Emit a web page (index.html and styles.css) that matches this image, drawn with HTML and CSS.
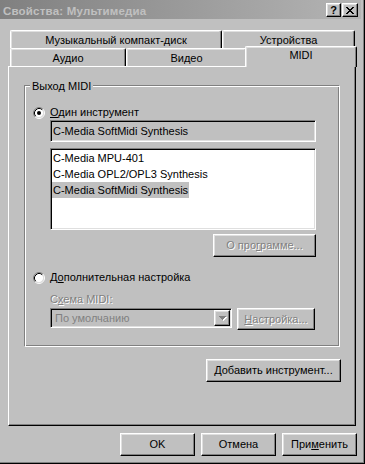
FILE: index.html
```html
<!DOCTYPE html>
<html lang="ru">
<head>
<meta charset="utf-8">
<title>Свойства: Мультимедиа</title>
<link rel="stylesheet" href="styles.css">
</head>
<body>
<div class="window">
  <div class="titlebar">
    <span class="title">Свойства: Мультимедиа</span>
    <div class="capbtns">
      <span class="capbtn help">?</span>
      <span class="capbtn close">
        <svg width="8" height="7" viewBox="0 0 8 7" shape-rendering="crispEdges"><path fill="#000" d="M0 0h2v1H0z M6 0h2v1H6z M1 1h2v1H1z M5 1h2v1H5z M2 2h4v1H2z M3 3h2v1H3z M2 4h4v1H2z M1 5h2v1H1z M5 5h2v1H5z M0 6h2v1H0z M6 6h2v1H6z"/></svg>
      </span>
    </div>
  </div>

  <div class="tabstrip">
    <div class="tabrow">
      <div class="tab tab-cd">Музыкальный компакт-диск</div>
      <div class="tab tab-dev">Устройства</div>
    </div>
    <div class="tabrow">
      <div class="tab tab-audio">Аудио</div>
      <div class="tab tab-video">Видео</div>
      <div class="tab tab-midi sel">MIDI</div>
    </div>
  </div>

  <div class="panel">
    <div class="group">
      <div class="legend">Выход MIDI</div>

      <div class="opt opt-first">
        <svg class="radio" width="12" height="12" viewBox="0 0 12 12">
          <circle cx="6" cy="6" r="4.5" fill="#fff"/>
          <path d="M2.11 9.89 A5.5 5.5 0 0 1 9.89 2.11" fill="none" stroke="#808080"/>
          <path d="M9.89 2.11 A5.5 5.5 0 0 1 2.11 9.89" fill="none" stroke="#fff"/>
          <path d="M2.82 9.18 A4.5 4.5 0 0 1 9.18 2.82" fill="none" stroke="#000"/>
          <path d="M9.18 2.82 A4.5 4.5 0 0 1 2.82 9.18" fill="none" stroke="#dfdfdf"/>
          <circle cx="6" cy="6" r="2" fill="#000"/>
        </svg>
        <span><u>О</u>дин инструмент</span>
      </div>

      <div class="field">C-Media SoftMidi Synthesis</div>

      <div class="list">
        <div class="item"><span>C-Media MPU-401</span></div>
        <div class="item"><span>C-Media OPL2/OPL3 Synthesis</span></div>
        <div class="item"><span class="selected">C-Media SoftMidi Synthesis</span></div>
      </div>

      <div class="btn disabled btn-about">О про<u>г</u>рамме...</div>

      <div class="opt opt-second">
        <svg class="radio" width="12" height="12" viewBox="0 0 12 12">
          <circle cx="6" cy="6" r="4.5" fill="#fff"/>
          <path d="M2.11 9.89 A5.5 5.5 0 0 1 9.89 2.11" fill="none" stroke="#808080"/>
          <path d="M9.89 2.11 A5.5 5.5 0 0 1 2.11 9.89" fill="none" stroke="#fff"/>
          <path d="M2.82 9.18 A4.5 4.5 0 0 1 9.18 2.82" fill="none" stroke="#000"/>
          <path d="M9.18 2.82 A4.5 4.5 0 0 1 2.82 9.18" fill="none" stroke="#dfdfdf"/>
        </svg>
        <span>Д<u>о</u>полнительная настройка</span>
      </div>

      <div class="scheme-label disabled-text">С<u>х</u>ема MIDI:</div>

      <div class="combo-row">
        <div class="combo">
          <span class="combo-text">По умолчанию</span>
          <span class="dropbtn">
            <svg width="9" height="6" viewBox="0 0 9 6" shape-rendering="crispEdges">
              <path fill="#fff" d="M2 2h7v1H2z M3 3h5v1H3z M4 4h3v1H4z M5 5h1v1H5z"/>
              <path fill="#808080" d="M1 1h7v1H1z M2 2h5v1H2z M3 3h3v1H3z M4 4h1v1H4z"/>
            </svg>
          </span>
        </div>
        <div class="btn disabled btn-setup"><u>Н</u>астройка...</div>
      </div>
    </div>

    <div class="btn btn-add"><u>Д</u>обавить инструмент...</div>
  </div>

  <div class="footer">
    <div class="btn btn-foot">OK</div>
    <div class="btn btn-foot">Отмена</div>
    <div class="btn btn-foot">При<u>м</u>енить</div>
  </div>
</div>
</body>
</html>
```

FILE: styles.css
```css
* {
  box-sizing: border-box;
}

html,
body {
  margin: 0;
  padding: 0;
}

body {
  width: 365px;
  height: 464px;
  overflow: hidden;
  background: #c0c0c0;
  color: #000;
  font-family: "Liberation Sans", Arial, sans-serif;
  font-size: 11px;
  line-height: 13px;
}

u {
  text-decoration: underline;
  text-underline-offset: 1px;
}

/* window frame (left/top cut off in the capture) */
.window {
  width: 365px;
  height: 464px;
  padding-right: 3px;
  border-right: 1px solid #000;
  border-bottom: 1px solid #000;
  box-shadow: inset -1px -1px #808080;
}

/* title bar */
.titlebar {
  height: 19px;
  display: flex;
  align-items: flex-start;
  padding: 0 3px 0 3px;
  background: linear-gradient(to right, #808080, #b4b4b4);
}

.title {
  flex: 1;
  padding-top: 5px;
  color: #c0c0c0;
  font-weight: bold;
  font-size: 11.5px;
  letter-spacing: 0.2px;
  white-space: nowrap;
}

.capbtns {
  display: flex;
  gap: 1px;
  margin-top: 3px;
}

.capbtn {
  width: 16px;
  height: 14px;
  display: flex;
  align-items: center;
  justify-content: center;
  background: #c0c0c0;
  border: 1px solid;
  border-color: #fff #000 #000 #fff;
  box-shadow: inset -1px -1px #808080, inset 1px 1px #dfdfdf;
}

.help {
  width: 15px;
  font-weight: bold;
  font-size: 11px;
  line-height: 11px;
}

/* tabs */
.tabstrip {
  width: 345px;
  margin: 11px 0 0 10px;
}

.tabrow {
  display: flex;
  height: 18px;
}

.tab {
  height: 18px;
  padding-top: 3px;
  text-align: center;
  white-space: nowrap;
  background: #c0c0c0;
  border-top: 1px solid #fff;
  border-left: 1px solid #fff;
  border-right: 1px solid #000;
  border-radius: 2px 2px 0 0;
  box-shadow: inset -1px 0 #808080, inset 1px 1px #dfdfdf;
}

.tab-cd {
  width: 212px;
}

.tab-dev {
  width: 133px;
}

.tab-audio {
  width: 116px;
}

.tab-video {
  width: 121px;
}

.tab-midi {
  width: 108px;
}

.tab.sel {
  position: relative;
  z-index: 1;
  width: 112px;
  height: 21px;
  margin: -2px -2px 0 -2px;
  padding-top: 2px;
  box-shadow: inset -1px 0 #808080, inset 1px 1px #dfdfdf;
}

/* tab page */
.panel {
  width: 348px;
  height: 360px;
  margin-left: 8px;
  display: flex;
  flex-direction: column;
  align-items: flex-start;
  border: 1px solid;
  border-color: #fff #000 #000 #fff;
  box-shadow: inset -1px -1px #808080;
}

.group {
  width: 316px;
  height: 262px;
  margin: 18px 0 0 15px;
  border: 1px solid;
  border-color: #808080 #fff #fff #808080;
  box-shadow: inset 1px 1px #fff, inset -1px -1px #808080;
  display: flex;
  flex-direction: column;
  align-items: flex-start;
}

.legend {
  width: max-content;
  margin: -6px 0 0 5px;
  padding: 0 2px;
  background: #c0c0c0;
}

.opt {
  display: flex;
  align-items: center;
  gap: 5px;
  height: 13px;
  margin-left: 8px;
  white-space: nowrap;
}

.radio {
  flex: none;
  display: block;
}

.opt-first {
  margin-top: 13px;
}

.opt-second {
  margin-top: 14px;
}

.sunken {
  border: 1px solid;
}

.field,
.list,
.combo {
  border: 1px solid;
  border-color: #808080 #fff #fff #808080;
  box-shadow: inset 1px 1px #000, inset -1px -1px #dfdfdf;
}

.field {
  width: 266px;
  height: 22px;
  margin: 1px 0 0 25px;
  padding: 0 0 0 2px;
  display: flex;
  align-items: center;
  background: #c0c0c0;
  white-space: nowrap;
}

.list {
  width: 266px;
  height: 82px;
  margin: 6px 0 0 25px;
  padding: 1px 0 0 1px;
  background: #fff;
}

.item {
  height: 16px;
  white-space: nowrap;
}

.item span {
  display: inline-block;
  height: 16px;
  line-height: 16px;
  padding: 0 1px;
}

.item .selected {
  background: #c0c0c0;
}

/* push buttons */
.btn {
  height: 23px;
  display: flex;
  align-items: center;
  justify-content: center;
  white-space: nowrap;
  background: #c0c0c0;
  border: 1px solid;
  border-color: #fff #000 #000 #fff;
  box-shadow: inset -1px -1px #808080, inset 1px 1px #dfdfdf;
}

.disabled,
.disabled-text {
  color: #808080;
  text-shadow: 1px 1px 0 #fff;
}

.btn-about {
  width: 103px;
  margin: 4px 0 0 188px;
}

.scheme-label {
  margin: 9px 0 0 25px;
  white-space: nowrap;
}

.combo-row {
  display: flex;
  align-items: flex-start;
  gap: 5px;
  margin: 2px 0 0 25px;
}

.combo {
  width: 182px;
  height: 20px;
  padding: 1px;
  display: flex;
  background: #c0c0c0;
}

.combo-text {
  flex: 1;
  padding-left: 3px;
  line-height: 17px;
  color: #808080;
  white-space: nowrap;
}

.dropbtn {
  width: 16px;
  height: 16px;
  display: flex;
  align-items: center;
  justify-content: center;
  border: 1px solid;
  border-color: #fff #000 #000 #fff;
  box-shadow: inset -1px -1px #808080, inset 1px 1px #dfdfdf;
}

.btn-setup {
  width: 78px;
  height: 22px;
}

.btn-add {
  width: 135px;
  margin: 12px 0 0 197px;
}

/* dialog buttons */
.footer {
  display: flex;
  justify-content: flex-end;
  gap: 6px;
  width: 357px;
  margin-top: 7px;
}

.btn-foot {
  width: 75px;
}
```
